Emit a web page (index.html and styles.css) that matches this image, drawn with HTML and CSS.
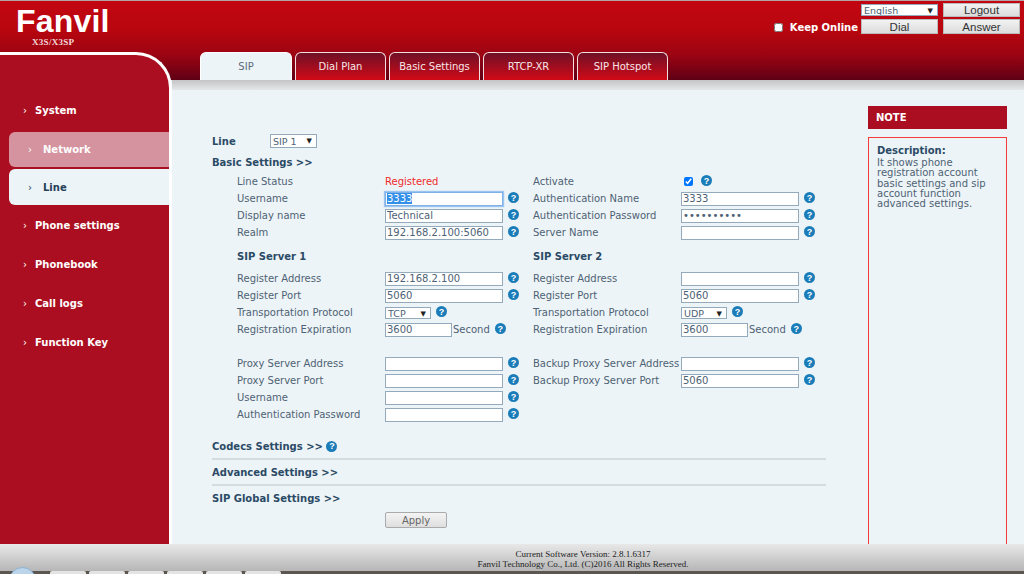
FILE: index.html
```html
<!DOCTYPE html>
<html lang="en">
<head>
    <meta charset="UTF-8">
    <meta name="viewport" content="width=device-width, initial-scale=1.0">
    <title>Fanvil X3S/X3SP</title>
    <link rel="stylesheet" href="styles.css">
</head>
<body>
    <header class="header">
        <div class="header-top">
            <div class="logo">
                <div class="logo-name">Fanvil</div>
                <div class="logo-model">X3S/X3SP</div>
            </div>
            <div class="top-controls">
                <span class="select-box lang"><select><option>English</option></select></span>
                <button class="top-btn">Logout</button>
                <label class="keep-online"><input type="checkbox"> Keep Online</label>
                <button class="top-btn">Dial</button>
                <button class="top-btn">Answer</button>
            </div>
        </div>
        <nav class="tabs">
            <a class="tab active">SIP</a>
            <a class="tab">Dial Plan</a>
            <a class="tab">Basic Settings</a>
            <a class="tab">RTCP-XR</a>
            <a class="tab">SIP Hotspot</a>
        </nav>
    </header>

    <div class="main">
        <aside class="sidebar">
            <ul class="side-nav">
                <li><span class="arrow">›</span>System</li>
                <li class="hover"><span class="arrow">›</span>Network</li>
                <li class="current"><span class="arrow">›</span>Line</li>
                <li><span class="arrow">›</span>Phone settings</li>
                <li><span class="arrow">›</span>Phonebook</li>
                <li><span class="arrow">›</span>Call logs</li>
                <li><span class="arrow">›</span>Function Key</li>
            </ul>
        </aside>

        <div class="content">
            <div class="band"></div>
            <div class="panes">
                <form class="form">
                    <div class="line-row">
                        <strong class="line-label">Line</strong>
                        <span class="select-box line-select"><select><option>SIP 1</option></select></span>
                    </div>
                    <div class="section-title first">Basic Settings &gt;&gt;</div>

                    <div class="form-grid">
                        <div class="row"><label>Line Status</label><span class="status">Registered</span></div>
                        <div class="row"><label>Activate</label><input class="check" type="checkbox" checked><span class="help">?</span></div>
                        <div class="row"><label>Username</label><input id="username" class="text focus" value="3333"><span class="help">?</span></div>
                        <div class="row"><label>Authentication Name</label><input class="text" value="3333"><span class="help">?</span></div>
                        <div class="row"><label>Display name</label><input class="text" value="Technical"><span class="help">?</span></div>
                        <div class="row"><label>Authentication Password</label><input class="text" type="password" value="1234567890"><span class="help">?</span></div>
                        <div class="row"><label>Realm</label><input class="text" value="192.168.2.100:5060"><span class="help">?</span></div>
                        <div class="row"><label>Server Name</label><input class="text"><span class="help">?</span></div>
                    </div>

                    <div class="form-grid titles">
                        <strong class="server-title">SIP Server 1</strong>
                        <strong class="server-title">SIP Server 2</strong>
                    </div>

                    <div class="form-grid">
                        <div class="row"><label>Register Address</label><input class="text" value="192.168.2.100"><span class="help">?</span></div>
                        <div class="row"><label>Register Address</label><input class="text"><span class="help">?</span></div>
                        <div class="row"><label>Register Port</label><input class="text" value="5060"><span class="help">?</span></div>
                        <div class="row"><label>Register Port</label><input class="text" value="5060"><span class="help">?</span></div>
                        <div class="row"><label>Transportation Protocol</label><span class="select-box proto"><select><option>TCP</option></select></span><span class="help">?</span></div>
                        <div class="row"><label>Transportation Protocol</label><span class="select-box proto"><select><option>UDP</option></select></span><span class="help">?</span></div>
                        <div class="row"><label>Registration Expiration</label><input class="text short" value="3600"><span class="unit">Second</span><span class="help">?</span></div>
                        <div class="row"><label>Registration Expiration</label><input class="text short" value="3600"><span class="unit">Second</span><span class="help">?</span></div>
                    </div>

                    <div class="form-grid proxy">
                        <div class="row"><label>Proxy Server Address</label><input class="text"><span class="help">?</span></div>
                        <div class="row"><label>Backup Proxy Server Address</label><input class="text"><span class="help">?</span></div>
                        <div class="row"><label>Proxy Server Port</label><input class="text"><span class="help">?</span></div>
                        <div class="row"><label>Backup Proxy Server Port</label><input class="text" value="5060"><span class="help">?</span></div>
                        <div class="row"><label>Username</label><input class="text"><span class="help">?</span></div>
                        <div class="row"></div>
                        <div class="row"><label>Authentication Password</label><input class="text"><span class="help">?</span></div>
                    </div>

                    <div class="section-title fold codecs">Codecs Settings &gt;&gt; <span class="help">?</span></div>
                    <div class="section-title fold">Advanced Settings &gt;&gt;</div>
                    <div class="section-title">SIP Global Settings &gt;&gt;</div>
                    <div class="apply-row"><button type="button" class="apply">Apply</button></div>
                </form>

                <aside class="note">
                    <div class="note-head">NOTE</div>
                    <div class="note-body">
                        <strong>Description:</strong>
                        <p>It shows phone registration account basic settings and sip account function advanced settings.</p>
                    </div>
                </aside>
            </div>
        </div>
    </div>

    <footer class="footer">
        <div>Current Software Version: 2.8.1.6317</div>
        <div>Fanvil Technology Co., Ltd. (C)2016 All Rights Reserved.</div>
    </footer>
    <div class="taskbar">
        <span class="start"></span>
        <span class="task"></span><span class="task"></span><span class="task"></span>
        <span class="task"></span><span class="task"></span><span class="task"></span>
    </div>

    <script>
        document.getElementById('username').select();
    </script>
</body>
</html>
```

FILE: styles.css
```css
* {
    box-sizing: border-box;
}
html, body {
    height: 100%;
}
body {
    margin: 0;
    display: flex;
    flex-direction: column;
    height: 574px;
    overflow: hidden;
    font-family: "DejaVu Sans", Verdana, sans-serif;
    font-size: 10px;
    color: #4d6274;
    background-color: #edf4f7;
}

/* header */
.header {
    flex: none;
    height: 80px;
    border-top: 1px solid #b5a3a3;
    background: linear-gradient(#c20612 0%, #b9060f 35%, #9c0412 68%, #5f0015 100%);
}
.header-top {
    display: flex;
    justify-content: space-between;
    height: 51px;
}
.logo {
    padding: 5px 0 0 16px;
    color: #fff;
}
.logo-name {
    font-family: "Liberation Sans", Arial, sans-serif;
    font-size: 32px;
    font-weight: bold;
    line-height: 30px;
    letter-spacing: 0.2px;
}
.logo-model {
    margin-top: 1px;
    padding-left: 16px;
    font-family: "Liberation Serif", serif;
    font-size: 9px;
    font-weight: bold;
    letter-spacing: 0.3px;
    line-height: 10px;
    color: #f4dcdc;
}
.top-controls {
    display: grid;
    grid-template-columns: auto 77px 77px;
    grid-template-rows: 14px 15px;
    column-gap: 5px;
    row-gap: 2px;
    padding: 2px 4px 0 0;
}
.lang {
    grid-column: 2;
    height: 12px;
    width: 77px;
    margin-top: 1px;
}
.keep-online {
    display: flex;
    align-items: center;
    gap: 7px;
    margin-right: -2px;
    font-weight: bold;
    color: #fff;
    padding-top: 2px;
}
.keep-online input {
    width: 9px;
    height: 9px;
    margin: 0;
}
.top-btn {
    padding: 0;
    border: 1px solid #bbb;
    background: linear-gradient(#f2f2f2, #dcdcdc);
    font-family: "Liberation Sans", Arial, sans-serif;
    font-size: 11.5px;
    color: #333;
}

/* tabs */
.tabs {
    display: flex;
    gap: 3px;
    height: 28px;
    margin-left: 200px;
}
.tab {
    width: 91px;
    padding-top: 8px;
    border: 1px solid #f2dfe0;
    border-bottom: none;
    border-radius: 6px 6px 0 0;
    background: linear-gradient(#6f1026, #d10a17);
    text-align: center;
    color: #f6e6e8;
}
.tab.active {
    width: 92px;
    background: #edf4f7;
    border-color: #fff;
    color: #5a6c7c;
}

/* sidebar */
.main {
    flex: 1;
    display: flex;
    min-height: 0;
}
.sidebar {
    flex: none;
    width: 172px;
    margin-top: -28px;
    padding-top: 36px;
    border-top: 3px solid #fff;
    border-right: 3px solid #fff;
    border-top-right-radius: 36px;
    background-color: #ab0e20;
}
.side-nav {
    margin: 0;
    padding: 0;
    list-style: none;
    font-weight: bold;
    color: #fff;
}
.side-nav li {
    display: flex;
    align-items: center;
    height: 39px;
    padding-left: 23px;
}
.arrow {
    width: 12px;
    font-size: 10px;
    font-weight: normal;
}
.side-nav .hover,
.side-nav .current {
    height: 35px;
    margin: 2px 0 2px 9px;
    padding-left: 19px;
    border-radius: 6px 0 0 6px;
    background-color: #d4939f;
}
.side-nav .current {
    height: 36px;
    margin-bottom: 1px;
    background-color: #edf4f7;
    color: #24405a;
}
.side-nav .hover .arrow,
.side-nav .current .arrow {
    width: 15px;
}

/* content */
.content {
    flex: 1;
    display: flex;
    flex-direction: column;
    min-width: 0;
}
.band {
    flex: none;
    height: 10px;
    background: linear-gradient(#c4c4c6, #e4e7e8);
}
.panes {
    flex: 1;
    display: flex;
    gap: 42px;
    padding: 16px 17px 0 40px;
    min-height: 0;
}
.form {
    flex: none;
    width: 614px;
}
.line-row {
    display: flex;
    align-items: center;
    height: 16px;
    margin-top: 27px;
    color: #2b4a66;
}
.line-label {
    width: 58px;
}
.line-select {
    width: 47px;
    height: 14px;
}
.section-title {
    height: 26px;
    line-height: 26px;
    font-weight: bold;
    color: #2b4a66;
}
.section-title.first {
    height: 20px;
    margin-top: 4px;
    line-height: 20px;
}
.section-title.fold {
    border-bottom: 2px solid #d8dbdc;
    height: 26px;
}
.section-title.codecs {
    margin-top: 11px;
}
.section-title .help {
    margin: 0;
    display: inline-flex;
    vertical-align: 1px;
}

.form-grid {
    display: grid;
    grid-template-columns: 296px 1fr;
    grid-auto-rows: 17px;
    padding-left: 25px;
}
.form-grid.titles {
    grid-auto-rows: 29px;
}
.form-grid.proxy {
    margin-top: 17px;
}
.server-title {
    padding-top: 10px;
    color: #2b4a66;
}
.row {
    display: flex;
    align-items: center;
}
.row label {
    flex: none;
    width: 148px;
}
.status {
    color: #f02a2a;
}
.text {
    width: 118px;
    height: 14px;
    margin: 0;
    padding: 0 1px;
    border: 1px solid #93aabd;
    border-radius: 0;
    background-color: #fff;
    font-family: "DejaVu Sans", Verdana, sans-serif;
    font-size: 10px;
    color: #4d6274;
    outline: none;
}
.text.short {
    width: 67px;
}
.text.focus {
    border-color: #7fb0e6;
    box-shadow: 0 0 1px 1px #9cc4f0;
}
.text::selection {
    background-color: #3390e8;
    color: #fff;
}
.check {
    width: 9px;
    height: 9px;
    margin: 0 0 0 3px;
}
.unit {
    margin-left: 1px;
}
.help {
    display: inline-flex;
    flex: none;
    align-items: center;
    justify-content: center;
    width: 11px;
    height: 11px;
    margin: -2px 0 0 5px;
    border-radius: 50%;
    background-color: #1a7cb8;
    font-family: "Liberation Sans", Arial, sans-serif;
    font-size: 9px;
    font-weight: bold;
    color: #fff;
}
.check + .help {
    margin-left: 8px;
}
.select-box {
    position: relative;
    display: inline-block;
    border: 1px solid #93aabd;
    background-color: #fff;
}
.select-box::after {
    content: "▼";
    position: absolute;
    top: 1px;
    right: 4px;
    font-size: 7px;
    line-height: 10px;
    color: #222;
}
.select-box select {
    display: block;
    width: 100%;
    height: 100%;
    padding: 0 0 0 2px;
    border: none;
    background: transparent;
    font-family: "DejaVu Sans", Verdana, sans-serif;
    font-size: 9.5px;
    color: #4d6274;
    appearance: none;
}
.proto {
    width: 46px;
    height: 12px;
    margin-top: 1px;
}
.proto + .help {
    margin-left: 5px;
}
.apply-row {
    padding: 0 0 0 173px;
}
.apply {
    width: 62px;
    height: 16px;
    padding: 0;
    border: 1px solid #aaa;
    border-radius: 2px;
    background: linear-gradient(#f4f4f4, #dedede);
    font-family: "DejaVu Sans", Verdana, sans-serif;
    font-size: 10px;
    color: #666;
}

/* note */
.note {
    flex: 1;
    display: flex;
    flex-direction: column;
}
.note-head {
    flex: none;
    height: 23px;
    padding-left: 8px;
    line-height: 23px;
    font-weight: bold;
    color: #fff;
    background-color: #ab0e20;
}
.note-body {
    flex: 1;
    margin-top: 8px;
    padding: 7px 8px;
    border: 1px solid #f43a3a;
    border-bottom: none;
}
.note-body strong {
    color: #2b4a66;
}
.note-body p {
    margin: 2px 0 0;
    line-height: 10.3px;
}

/* footer */
.footer {
    flex: none;
    height: 27px;
    padding: 6px 0 0 142px;
    background: linear-gradient(#e8e8e8, #b6b6b6);
    font-family: "Liberation Serif", serif;
    font-size: 9px;
    line-height: 9.5px;
    text-align: center;
    color: #222;
}
.taskbar {
    position: relative;
    flex: none;
    display: flex;
    gap: 3px;
    height: 3px;
    padding-left: 50px;
    background-color: #5c5650;
}
.start {
    position: absolute;
    left: 9px;
    top: -4px;
    width: 27px;
    height: 27px;
    border: 1px solid #8ab2d6;
    border-radius: 50%;
    background-color: #bcd4ea;
}
.task {
    width: 36px;
    border-radius: 2px 2px 0 0;
    background-color: #e4e4e4;
}
```
